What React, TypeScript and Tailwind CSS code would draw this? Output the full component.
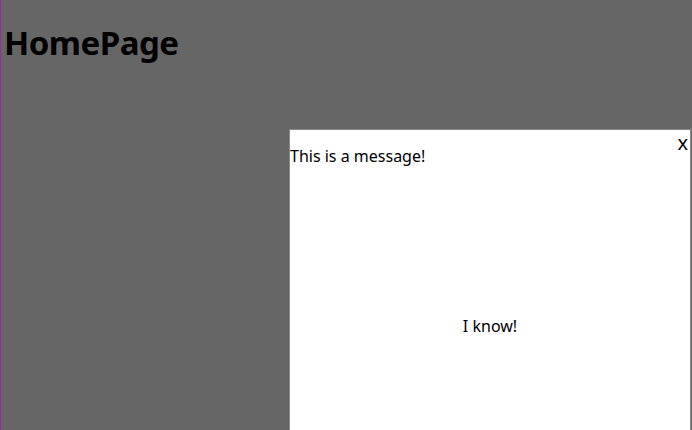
import React, { useState } from 'react';

// Modal message panel shown over the home page
function MessageBox({ onClose }: { onClose: () => void }) {
  return (
    <div className="absolute left-[288px] top-[129px] w-[402px] h-[400px] bg-white border border-[#8a8a8a] flex flex-col">
      <button
        onClick={onClose}
        className="absolute right-[2px] top-[1px] text-[20px] leading-[24px] text-black cursor-pointer"
      >
        x
      </button>
      <p className="mt-[14px] text-[16px] leading-[24px] text-black">This is a message!</p>
      <div className="flex justify-center mt-[146px]">
        <button onClick={onClose} className="text-[16px] leading-[24px] text-black cursor-pointer">
          I know!
        </button>
      </div>
    </div>
  );
}

export default function App() {
  const [open, setOpen] = useState(true);

  return (
    <div
      className="relative h-[430px] w-[692px] overflow-hidden bg-[#666666] border-l border-[#9a2a9a]"
      style={{ fontFamily: '"Noto Sans", "Noto Sans CJK SC", sans-serif' }}
    >
      <h1 className="pt-[20px] pl-[3px] text-[33px] leading-[46px] font-bold text-black tracking-[-0.5px]">
        HomePage
      </h1>
      {open && <MessageBox onClose={() => setOpen(false)} />}
    </div>
  );
}
